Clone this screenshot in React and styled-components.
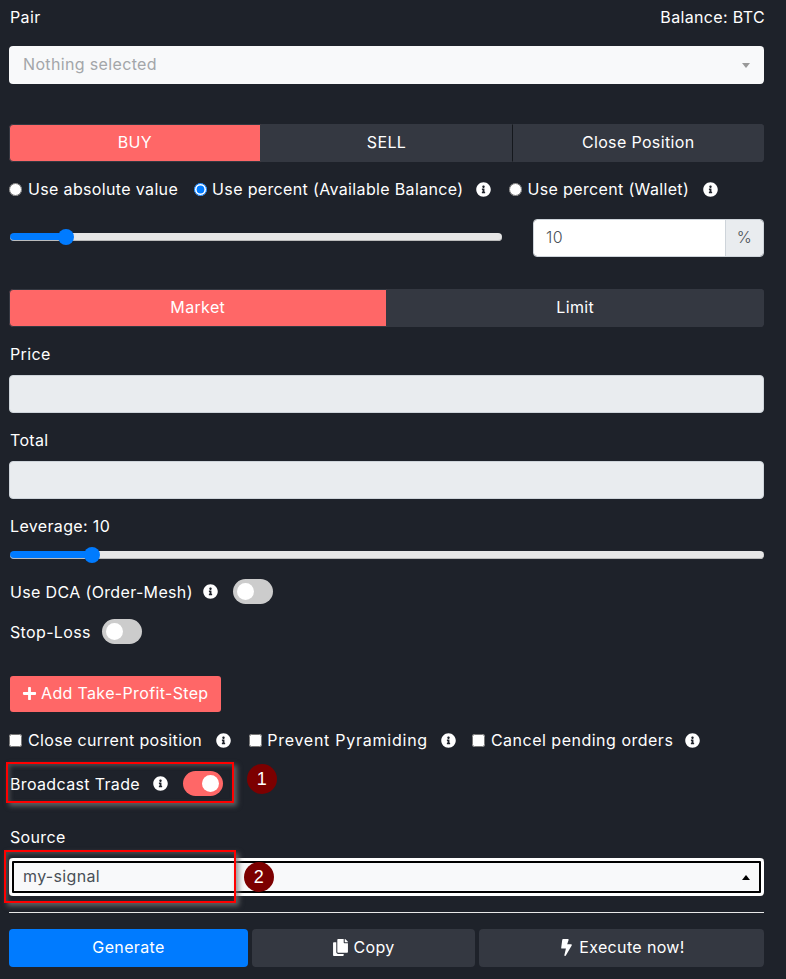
import React from 'react'
import styled, { createGlobalStyle } from 'styled-components'
import { FaInfoCircle, FaPlus, FaCopy, FaBolt } from 'react-icons/fa'

const GlobalStyle = createGlobalStyle`
  html, body {
    margin: 0;
    background: #1e222a;
  }
  body {
    font-family: Inter, "Open Sans", "Liberation Sans", sans-serif;
    font-size: 16px;
    color: #fff;
  }
`

const coral = '#ff6767'
const slate = '#343841'

const Page = styled.div`
  position: relative;
  box-sizing: border-box;
  width: 786px;
  height: 979px;
  padding: 5px 22px 0 9px;
  overflow: hidden;
  letter-spacing: 0.35px;
`
const Row = styled.div`
  display: flex;
  align-items: center;
  height: ${p => p.$height || 24}px;
  margin-top: ${p => p.$top || 0}px;
  padding-left: ${p => p.$inset || 0}px;
`
const SpacedRow = styled(Row)`
  justify-content: space-between;
  margin-right: -1px;
`
const Label = styled.div`
  height: 24px;
  line-height: 24px;
  margin-top: ${p => p.$top || 0}px;
  padding-left: 1px;
`
const Picker = styled.button`
  display: flex;
  align-items: center;
  justify-content: space-between;
  box-sizing: border-box;
  width: 100%;
  height: 38px;
  margin-top: ${p => p.$top || 0}px;
  padding: 0 14px 2px;
  border: none;
  border-radius: 4px;
  background: #f8f9fa;
  font: inherit;
  letter-spacing: inherit;
  color: ${p => (p.$open ? '#495057' : '#a3a6a9')};
  box-shadow: ${p => (p.$open ? 'inset 0 0 0 3px #fff, inset 0 0 0 5px #000' : 'none')};
`
const Caret = styled.span`
  width: 0;
  height: 0;
  margin-top: 2px;
  border-left: 4.5px solid transparent;
  border-right: 4.5px solid transparent;
  border-top: ${p => (p.$up ? '0' : '5px solid #999')};
  border-bottom: ${p => (p.$up ? '5px solid #000' : '0')};
`
const Segments = styled.div`
  display: flex;
  height: 38px;
  margin-top: ${p => p.$top || 0}px;
  border-radius: 4px;
  overflow: hidden;
  background: ${slate};
`
const Segment = styled.button`
  flex: 1 1 0;
  box-sizing: border-box;
  padding: 0 0 2px;
  border: 1px solid ${slate};
  border-left-color: ${p => (p.$divided ? '#15181d' : slate)};
  border-radius: ${p => (p.$active ? '4px 0 0 4px' : '0')};
  background: ${p => (p.$active ? coral : slate)};
  color: #fff;
  font: inherit;
  letter-spacing: inherit;
`
const Option = styled.label`
  display: inline-flex;
  align-items: center;
  white-space: nowrap;
  margin-right: ${p => p.$after || 0}px;
  letter-spacing: ${p => p.$spacing || 'inherit'};
`
const Radio = styled.input.attrs({ type: 'radio', readOnly: true })`
  width: 13px;
  height: 13px;
  margin: 0 ${p => p.$gap || 6}px 0 0;
  accent-color: #007bff;
`
const Check = styled.input.attrs({ type: 'checkbox', readOnly: true })`
  width: 13px;
  height: 13px;
  margin: 0 ${p => p.$gap || 6}px 0 0;
`
const Info = styled(FaInfoCircle)`
  flex: none;
  width: 15px;
  height: 15px;
  color: #fff;
  margin-left: ${p => p.$before || 0}px;
  margin-right: ${p => p.$after || 0}px;
`
const Slider = styled.input.attrs({ type: 'range', readOnly: true })`
  appearance: none;
  display: block;
  flex: none;
  box-sizing: border-box;
  width: ${p => p.$width};
  height: 16px;
  margin: 0 0 ${p => p.$lift || 0}px 1px;
  background: transparent;
  --fill: ${p => p.$fill};
  &::-webkit-slider-runnable-track {
    height: 8px;
    border-radius: 4px;
    background: linear-gradient(to right, #007bff var(--fill), #e6e6e6 var(--fill));
    box-shadow: inset 0 -1px 0 #bbb;
  }
  &::-webkit-slider-thumb {
    appearance: none;
    width: 16px;
    height: 16px;
    margin-top: -4px;
    border-radius: 50%;
    background: #007bff;
  }
`
const AmountGroup = styled.div`
  display: flex;
  box-sizing: border-box;
  width: 231px;
  height: 38px;
  margin-left: auto;
  border: 1px solid #ced4da;
  border-radius: 4px;
  overflow: hidden;
`
const AmountInput = styled.input`
  flex: 1;
  min-width: 0;
  box-sizing: border-box;
  padding: 0 12px 2px;
  border: none;
  background: #fff;
  color: #495057;
  font: inherit;
  font-weight: 300;
  letter-spacing: inherit;
`
const AmountUnit = styled.div`
  display: flex;
  align-items: center;
  justify-content: center;
  width: 38px;
  padding-bottom: 2px;
  box-sizing: border-box;
  border-left: 1px solid #ced4da;
  background: #e9ecef;
  color: #495057;
  font-weight: 300;
`
const LockedInput = styled.input.attrs({ disabled: true })`
  display: block;
  box-sizing: border-box;
  width: 100%;
  height: 38px;
  margin-top: ${p => p.$top || 0}px;
  border: 1px solid #ced4da;
  border-radius: 4px;
  background: #e9ecef;
`
const Toggle = styled.span`
  position: relative;
  display: inline-block;
  flex: none;
  width: 40px;
  height: 25px;
  margin-left: ${p => p.$before || 0}px;
  border-radius: 13px;
  background: ${p => (p.$on ? coral : '#ccc')};
  &::after {
    content: '';
    position: absolute;
    top: 4px;
    left: ${p => (p.$on ? '19px' : '4px')};
    width: 17px;
    height: 17px;
    border-radius: 50%;
    background: #fff;
  }
`
const AddButton = styled.button`
  display: flex;
  align-items: center;
  gap: 4px;
  width: 211px;
  height: 36px;
  margin: 32px 0 0 1px;
  padding: 0 12px 2px;
  border: none;
  border-radius: 3px;
  background: ${coral};
  color: #fff;
  font: inherit;
  letter-spacing: inherit;
  white-space: nowrap;
  svg {
    width: 15px;
    height: 15px;
  }
`
const Rule = styled.hr`
  height: 1px;
  margin: 16px 0 0;
  border: none;
  background: #e8e8e8;
`
const Footer = styled.div`
  display: flex;
  gap: 4px;
  height: 38px;
  margin-top: 16px;
`
const FooterButton = styled.button`
  display: flex;
  align-items: center;
  justify-content: center;
  gap: 4px;
  width: ${p => p.$width}px;
  padding: 0 0 2px;
  border: none;
  border-radius: 4px;
  background: ${p => (p.$primary ? '#007bff' : slate)};
  color: #fff;
  font: inherit;
  letter-spacing: inherit;
  svg {
    width: 17px;
    height: 17px;
  }
`
/* screenshot annotations drawn over the form */
const Callout = styled.div`
  position: absolute;
  left: ${p => p.$x}px;
  top: ${p => p.$y}px;
  width: ${p => p.$w}px;
  height: ${p => p.$h}px;
  box-sizing: border-box;
  border: 2px solid #f00;
  box-shadow: 3px 3px 5px rgba(120, 120, 120, 0.75), inset 2px 2px 4px rgba(120, 120, 120, 0.5);
`
const Badge = styled.div`
  position: absolute;
  left: ${p => p.$x}px;
  top: ${p => p.$y}px;
  display: flex;
  align-items: center;
  justify-content: center;
  width: 30px;
  height: 30px;
  border-radius: 50%;
  background: #7c0000;
  color: #fff;
  font-family: "Liberation Sans", sans-serif;
  font-size: 18px;
`

export default function App() {
  return (
    <Page>
      <GlobalStyle />

      <SpacedRow $inset={1}>
        <span>Pair</span>
        <span>Balance: BTC</span>
      </SpacedRow>
      <Picker $top={17}>
        Nothing selected
        <Caret />
      </Picker>

      <Segments $top={40}>
        <Segment $active>BUY</Segment>
        <Segment>SELL</Segment>
        <Segment $divided>Close Position</Segment>
      </Segments>

      <Row $top={15}>
        <Option $after={16}><Radio />Use absolute value</Option>
        <Option><Radio $gap={5} defaultChecked name="amount" />Use percent (Available Balance)</Option>
        <Info $before={12} $after={18} />
        <Option><Radio />Use percent (Wallet)</Option>
        <Info $before={14} />
      </Row>

      <Row $top={18} $height={38}>
        <Slider $width="492px" $fill="11%" $lift={2} defaultValue={10} />
        <AmountGroup>
          <AmountInput defaultValue="10" />
          <AmountUnit>%</AmountUnit>
        </AmountGroup>
      </Row>

      <Segments $top={32}>
        <Segment $active>Market</Segment>
        <Segment>Limit</Segment>
      </Segments>

      <Label $top={15}>Price</Label>
      <LockedInput $top={9} />
      <Label $top={15}>Total</Label>
      <LockedInput $top={9} />
      <Label $top={15}>Leverage: 10</Label>

      <Row $top={9} $height={16}>
        <Slider $width="754px" $fill="11%" defaultValue={10} />
      </Row>

      <Row $top={16} $height={25} $inset={1}>
        Use DCA (Order-Mesh)
        <Info $before={10} />
        <Toggle $before={15} />
      </Row>
      <Row $top={15} $height={25} $inset={1}>
        Stop-Loss
        <Toggle $before={11} />
      </Row>

      <AddButton>
        <FaPlus />
        Add Take-Profit-Step
      </AddButton>

      <Row $top={16}>
        <Option><Check />Close current position</Option>
        <Info $before={14} $after={18} />
        <Option $spacing="0.75px"><Check $gap={5} />Prevent Pyramiding</Option>
        <Info $before={13} $after={16} />
        <Option $spacing="0.5px"><Check />Cancel pending orders</Option>
        <Info $before={12} />
      </Row>

      <Row $top={19} $height={25} $inset={1}>
        Broadcast Trade
        <Info $before={13} />
        <Toggle $before={15} $on />
      </Row>

      <Label $top={29}>Source</Label>
      <Picker $top={9} $open>
        my-signal
        <Caret $up />
      </Picker>

      <Rule />

      <Footer>
        <FooterButton $primary $width={239}>Generate</FooterButton>
        <FooterButton $width={223}><FaCopy />Copy</FooterButton>
        <FooterButton $width={285}><FaBolt />Execute now!</FooterButton>
      </Footer>

      <Callout $x={6} $y={762} $w={228} $h={41} />
      <Badge $x={247} $y={764}>1</Badge>
      <Callout $x={4} $y={850} $w={232} $h={53} />
      <Badge $x={244} $y={862}>2</Badge>
    </Page>
  )
}
